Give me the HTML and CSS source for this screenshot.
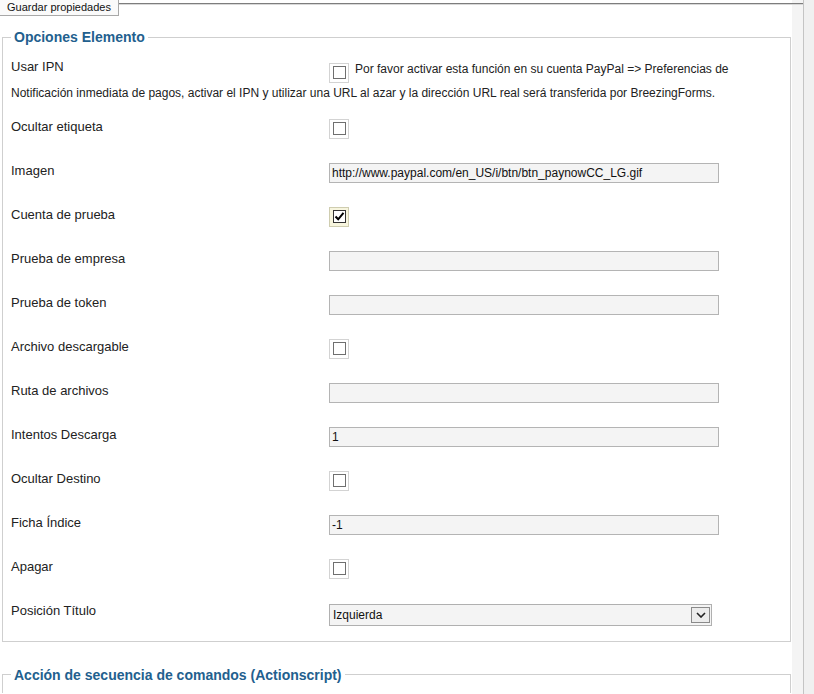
FILE: index.html
```html
<!DOCTYPE html>
<html lang="es">
<head>
<meta charset="utf-8">
<title>Opciones Elemento</title>
<link rel="stylesheet" href="styles.css">
</head>
<body>
<div class="page">
  <div class="main">
    <div class="topbar">
      <button class="save" type="button">Guardar propiedades</button>
      <div class="topline"></div>
    </div>

    <fieldset class="group first">
      <legend>Opciones Elemento</legend>

      <div class="ipn">
        <span class="lbl float">Usar IPN</span><span class="cb"><span class="cb-inner"></span></span><span class="help">Por favor activar esta función en su cuenta PayPal =&gt; Preferencias de</span> <span class="help">Notificación inmediata de pagos, activar el IPN y utilizar una URL al azar y la dirección URL real será transferida por BreezingForms.</span>
      </div>

      <div class="row"><span class="lbl">Ocultar etiqueta</span><span class="cb"><span class="cb-inner"></span></span></div>
      <div class="row"><span class="lbl">Imagen</span><span class="txt">http://www.paypal.com/en_US/i/btn/btn_paynowCC_LG.gif</span></div>
      <div class="row"><span class="lbl">Cuenta de prueba</span><span class="cb checked"><span class="cb-inner"><svg width="11" height="11" viewBox="0 0 11 11"><path d="M1.5 5.5 L4.2 8.3 L9.5 1.8" fill="none" stroke="#000" stroke-width="2"/></svg></span></span></div>
      <div class="row"><span class="lbl">Prueba de empresa</span><span class="txt"></span></div>
      <div class="row"><span class="lbl">Prueba de token</span><span class="txt"></span></div>
      <div class="row"><span class="lbl">Archivo descargable</span><span class="cb"><span class="cb-inner"></span></span></div>
      <div class="row"><span class="lbl">Ruta de archivos</span><span class="txt"></span></div>
      <div class="row"><span class="lbl">Intentos Descarga</span><span class="txt">1</span></div>
      <div class="row"><span class="lbl">Ocultar Destino</span><span class="cb"><span class="cb-inner"></span></span></div>
      <div class="row"><span class="lbl">Ficha Índice</span><span class="txt">-1</span></div>
      <div class="row"><span class="lbl">Apagar</span><span class="cb"><span class="cb-inner"></span></span></div>
      <div class="row last"><span class="lbl">Posición Título</span><span class="sel"><span class="sel-text">Izquierda</span><span class="sel-btn"><svg width="10" height="6" viewBox="0 0 10 6"><path d="M1 1 L5 5 L9 1" fill="none" stroke="#222" stroke-width="1.6"/></svg></span></span></div>
    </fieldset>

    <fieldset class="group second">
      <legend>Acción de secuencia de comandos (Actionscript)</legend>
    </fieldset>
  </div>
  <div class="strip"><div class="strip-a"></div><div class="strip-line"></div><div class="strip-b"></div></div>
</div>
</body>
</html>
```

FILE: styles.css
```css
html, body {
  margin: 0;
  padding: 0;
  background: #fff;
  overflow: hidden;
}
body {
  font-family: "Liberation Sans", Arial, sans-serif;
  color: #222;
  width: 814px;
  height: 694px;
}
.page {
  display: flex;
  width: 814px;
  height: 694px;
  overflow: hidden;
}
.main {
  width: 792px;
  flex: none;
}
.topbar {
  display: flex;
  height: 16px;
  margin-top: -1px;
  margin-right: -11px;
  position: relative;
  z-index: 1;
}
.save {
  width: 119px;
  height: 17px;
  margin: 0;
  padding: 0 0 0 7px;
  text-align: left;
  font-family: "Liberation Sans", Arial, sans-serif;
  font-size: 11px;
  line-height: 13px;
  color: #111;
  background: #fafafa;
  border: 1px solid #a8a8a8;
  border-left: none;
  border-top: none;
}
.topline {
  flex: 1;
  height: 0;
  margin-top: 4px;
  border-top: 1px solid #7d7d7d;
  box-shadow: 0 1px 0 #d8d8d8;
}
.group {
  margin: 0 0 0 2px;
  width: 789px;
  box-sizing: border-box;
  border: 1px solid #cfcfcf;
  padding: 0 8px;
}
.group legend {
  padding: 0 3px;
  margin-left: 0;
  font-size: 14px;
  font-weight: bold;
  line-height: 16px;
  color: #22608e;
}
.first {
  margin-top: 14px;
  padding-top: 14px;
  padding-bottom: 15px;
}
.second {
  margin-top: 25px;
  height: 26px;
  border-bottom: none;
}
.lbl {
  font-size: 13px;
  line-height: 15px;
  color: #222;
}
.float {
  float: left;
  width: 318px;
}
.ipn {
  font-size: 12px;
  line-height: 20px;
  margin-bottom: 16px;
}
.ipn .cb {
  display: inline-flex;
  vertical-align: -6px;
  margin-right: 6px;
}
.help {
  font-size: 12px;
  color: #222;
}
.row {
  display: flex;
  align-items: flex-start;
  min-height: 21px;
  margin-bottom: 23px;
}
.row.last {
  margin-bottom: 0;
}
.row .lbl {
  width: 318px;
  flex: none;
}
.cb {
  width: 20px;
  height: 20px;
  border: 1px solid #d3d3d3;
  background: #fff;
  display: flex;
  align-items: center;
  justify-content: center;
  box-sizing: border-box;
  flex: none;
}
.cb-inner {
  width: 13px;
  height: 13px;
  box-sizing: border-box;
  border: 1px solid #6f6f6f;
  background: #fff;
  display: flex;
  align-items: center;
  justify-content: center;
}
.cb.checked {
  background: #f7f5de;
  border-color: #cfcdb0;
}
.cb.checked .cb-inner {
  border-color: #333;
}
.txt {
  width: 390px;
  height: 20px;
  box-sizing: border-box;
  border: 1px solid #b4b4b4;
  background: #f4f4f4;
  font-size: 12px;
  line-height: 18px;
  padding-left: 2px;
  color: #111;
  white-space: nowrap;
  overflow: hidden;
}
.sel {
  width: 383px;
  height: 22px;
  box-sizing: border-box;
  border: 1px solid #b0b0b0;
  background: #f4f4f4;
  display: flex;
  align-items: center;
  justify-content: space-between;
  padding: 0 1px 0 3px;
  margin-top: 1px;
}
.sel-text {
  font-size: 12px;
  color: #111;
}
.sel-btn {
  width: 19px;
  height: 16px;
  box-sizing: border-box;
  border: 1px solid #8a8a8a;
  background: #ececec;
  display: flex;
  align-items: center;
  justify-content: center;
}
.strip {
  flex: 1;
  display: flex;
  height: 694px;
}
.strip-a {
  width: 11px;
  background: #f4f4f4;
}
.strip-line {
  width: 1px;
  background: #c4c4c4;
}
.strip-b {
  flex: 1;
  background: #f0f0f0;
}
```
